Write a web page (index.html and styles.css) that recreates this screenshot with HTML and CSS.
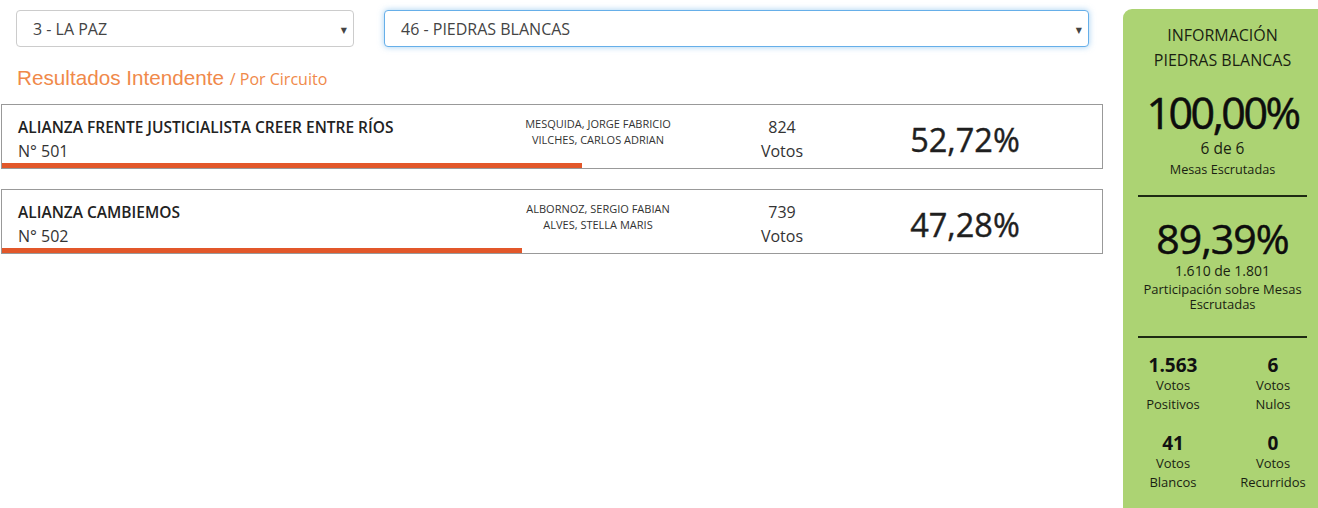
FILE: index.html
```html
<!DOCTYPE html>
<html lang="es">
<head>
<meta charset="utf-8">
<title>Resultados Intendente</title>
<link rel="stylesheet" href="styles.css">
</head>
<body>
<div class="page">
  <div class="main">
    <div class="filters">
      <div class="select sel-dep"><span>3 - LA PAZ</span><span class="caret">▼</span></div>
      <div class="select sel-circ focused"><span>46 - PIEDRAS BLANCAS</span><span class="caret">▼</span></div>
    </div>
    <h2 class="title">Resultados Intendente <small>/ Por Circuito</small></h2>
    <div class="card">
      <div class="party">
        <div class="party-name">ALIANZA FRENTE JUSTICIALISTA CREER ENTRE RÍOS</div>
        <div class="party-num">N° 501</div>
      </div>
      <div class="cands">MESQUIDA, JORGE FABRICIO<br>VILCHES, CARLOS ADRIAN</div>
      <div class="votes">824<br>Votos</div>
      <div class="pct">52,72%</div>
      <div class="bar" style="width:52.72%"></div>
    </div>
    <div class="card">
      <div class="party">
        <div class="party-name">ALIANZA CAMBIEMOS</div>
        <div class="party-num">N° 502</div>
      </div>
      <div class="cands">ALBORNOZ, SERGIO FABIAN<br>ALVES, STELLA MARIS</div>
      <div class="votes">739<br>Votos</div>
      <div class="pct">47,28%</div>
      <div class="bar" style="width:47.28%"></div>
    </div>
  </div>
  <aside class="info">
    <div class="info-title">INFORMACIÓN<br>PIEDRAS BLANCAS</div>
    <div class="big big1">100,00%</div>
    <div class="sub1">6 de 6</div>
    <div class="sub2">Mesas Escrutadas</div>
    <hr class="sep">
    <div class="big big2">89,39%</div>
    <div class="sub3">1.610 de 1.801</div>
    <div class="sub4">Participación sobre Mesas<br>Escrutadas</div>
    <hr class="sep sep2">
    <div class="stats">
      <div class="stat"><b>1.563</b><span>Votos<br>Positivos</span></div>
      <div class="stat"><b>6</b><span>Votos<br>Nulos</span></div>
      <div class="stat"><b>41</b><span>Votos<br>Blancos</span></div>
      <div class="stat"><b>0</b><span>Votos<br>Recurridos</span></div>
    </div>
  </aside>
</div>
</body>
</html>
```
FILE: styles.css
```css
html, body {
  margin: 0;
  padding: 0;
  background: #fff;
  overflow: hidden;
}
body {
  font-family: "Open Sans", "DejaVu Sans", sans-serif;
  color: #333;
  width: 1318px;
  height: 508px;
}
.page {
  display: flex;
  align-items: flex-start;
}
.main {
  flex: 0 0 1102px;
  width: 1102px;
  padding-left: 1px;
}
.filters {
  display: flex;
  gap: 30px;
  padding: 10px 0 0 15px;
}
.select {
  box-sizing: border-box;
  height: 37px;
  border: 1px solid #ccc;
  border-radius: 4px;
  display: flex;
  align-items: center;
  justify-content: space-between;
  padding: 0 6px 0 16px;
  font-size: 16px;
  color: #444;
  background: #fff;
}
.sel-dep { width: 338px; }
.sel-circ { width: 705px; }
.focused {
  border-color: #66afe9;
  box-shadow: 0 0 6px rgba(102, 175, 233, 0.6);
}
.caret {
  font-size: 8px;
  color: #444;
  margin-top: 1px;
}
.title {
  margin: 20px 0 14px 16px;
  font-family: "Liberation Sans", Arial, sans-serif;
  font-weight: normal;
  font-size: 20.7px;
  line-height: 22px;
  color: #f0894a;
}
.title small {
  font-family: "Open Sans", sans-serif;
  font-size: 16px;
  color: #f0894a;
}
.card {
  position: relative;
  box-sizing: border-box;
  height: 65px;
  border: 1px solid #999;
  display: flex;
  align-items: flex-start;
  margin-bottom: 20px;
}
.party {
  flex: 0 0 498px;
  padding: 12px 0 0 16px;
  box-sizing: border-box;
}
.party-name {
  font-size: 15.5px;
  font-weight: 600;
  line-height: 20px;
  color: #222;
  white-space: nowrap;
}
.party-num {
  font-size: 16px;
  line-height: 28px;
  color: #333;
}
.cands {
  flex: 0 0 196px;
  text-align: center;
  font-size: 11px;
  line-height: 16px;
  padding-top: 11px;
  color: #333;
}
.votes {
  flex: 0 0 172px;
  text-align: center;
  font-size: 16px;
  line-height: 24px;
  padding-top: 10px;
  color: #333;
}
.pct {
  flex: 0 0 194px;
  text-align: center;
  font-size: 32.5px;
  font-weight: 400;
  line-height: 40px;
  padding-top: 15px;
  color: #1f1f1f;
  -webkit-text-stroke: 0.4px #1f1f1f;
}
.bar {
  position: absolute;
  left: 0;
  bottom: 0;
  height: 5px;
  background: #e2572a;
}
.info {
  flex: 0 0 205px;
  box-sizing: border-box;
  margin: 9px 0 0 20px;
  width: 205px;
  height: 520px;
  background: #acd373;
  border-top-left-radius: 9px;
  padding: 13.5px 21px 0 15px;
  text-align: center;
  color: #1a1f12;
}
.info-title {
  font-size: 16px;
  line-height: 25px;
  text-transform: uppercase;
}
.big {
  font-weight: 400;
  color: #0d0d0d;
  -webkit-text-stroke: 0.5px #0d0d0d;
}
.big1 {
  font-size: 43px;
  line-height: 52px;
  letter-spacing: -2.5px;
  margin-top: 14.5px;
}
.big2 {
  font-size: 41px;
  line-height: 48px;
  letter-spacing: -1px;
  margin-top: 17px;
}
.sub1 {
  font-size: 15.5px;
  line-height: 18px;
}
.sub2 {
  font-size: 12.7px;
  line-height: 16px;
  margin-top: 4px;
}
.sub3 {
  font-size: 14px;
  line-height: 18px;
}
.sub4 {
  font-size: 13px;
  line-height: 15px;
  margin-top: 1.5px;
}
.sep {
  border: 0;
  height: 2px;
  background: #1e2a12;
  margin: 18px 0 0;
}
.sep2 {
  margin-top: 24.5px;
}
.stats {
  display: grid;
  grid-template-columns: 70px 70px;
  column-gap: 30px;
  row-gap: 18px;
  margin-top: 16px;
}
.stat {
  display: flex;
  flex-direction: column;
  align-items: center;
}
.stat b {
  font-size: 19px;
  line-height: 22px;
  font-weight: 700;
  color: #111;
}
.stat span {
  font-size: 13px;
  line-height: 19px;
  white-space: nowrap;
}
```
